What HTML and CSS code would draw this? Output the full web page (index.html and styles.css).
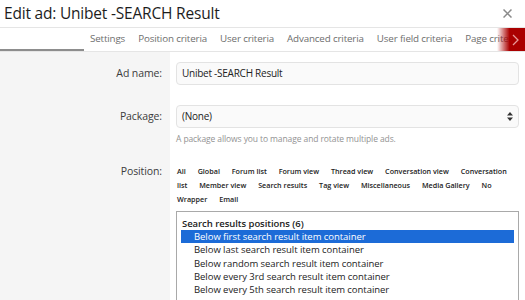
FILE: index.html
```html
<!DOCTYPE html>
<html lang="en">
<head>
    <meta charset="UTF-8">
    <meta name="viewport" content="width=device-width, initial-scale=1.0">
    <title>Edit ad</title>
    <link rel="stylesheet" href="styles.css">
</head>
<body>
    <div class="overlay">
        <div class="overlay-title">
            <span class="title-text">Edit ad: Unibet -SEARCH Result</span>
            <svg class="close" width="9" height="9" viewBox="0 0 9 9"><path d="M0.5 0.5 L8.5 8.5 M8.5 0.5 L0.5 8.5" stroke="#8a8a8a" stroke-width="1.5"/></svg>
        </div>

        <div class="tabs">
            <div class="tabs-line"></div>
            <span class="tab">Settings</span>
            <span class="tab">Position criteria</span>
            <span class="tab">User criteria</span>
            <span class="tab">Advanced criteria</span>
            <span class="tab">User field criteria</span>
            <span class="tab">Page criteria</span>
            <span class="tabs-next">
                <svg width="8" height="12" viewBox="0 0 8 12"><path d="M2 1 L7 6 L2 11" fill="none" stroke="#e89a9a" stroke-width="1.3"/></svg>
            </span>
        </div>

        <div class="form">
            <div class="form-label row-name">Ad name:</div>
            <div class="form-field row-name">
                <div class="input">Unibet -SEARCH Result</div>
            </div>

            <div class="form-label row-pkg">Package:</div>
            <div class="form-field row-pkg">
                <div class="input select">
                    <span>(None)</span>
                    <svg width="6" height="9" viewBox="0 0 6 9"><path d="M3 0 L6 3.5 L0 3.5 Z M3 9 L6 5.5 L0 5.5 Z" fill="#333"/></svg>
                </div>
                <div class="hint">A package allows you to manage and rotate multiple ads.</div>
            </div>

            <div class="form-label row-pos">Position:</div>
            <div class="form-field row-pos">
                <div class="pos-links">
                    <span>All</span>
                    <span>Global</span>
                    <span>Forum list</span>
                    <span>Forum view</span>
                    <span>Thread view</span>
                    <span>Conversation view</span>
                    <span>Conversation list</span>
                    <span>Member view</span>
                    <span>Search results</span>
                    <span>Tag view</span>
                    <span>Miscellaneous</span>
                    <span>Media Gallery</span>
                    <span>No Wrapper</span>
                    <span>Email</span>
                </div>
                <div class="listbox">
                    <div class="group-label">Search results positions (6)</div>
                    <div class="option selected">Below first search result item container</div>
                    <div class="option">Below last search result item container</div>
                    <div class="option">Below random search result item container</div>
                    <div class="option">Below every 3rd search result item container</div>
                    <div class="option">Below every 5th search result item container</div>
                </div>
            </div>
        </div>
    </div>
</body>
</html>
```

FILE: styles.css
```css
body {
    margin: 0;
    font-family: "Open Sans", "Noto Sans", sans-serif;
    color: #141414;
    background: #fff;
    overflow: hidden;
}
.overlay {
    width: 525px;
    height: 300px;
    overflow: hidden;
}
.overlay-title {
    height: 27px;
    border-bottom: 1px solid #e5e5e5;
    display: flex;
    align-items: center;
    justify-content: space-between;
    padding: 0 13px 0 4px;
}
.title-text {
    font-size: 15.5px;
    letter-spacing: -0.2px;
    color: #1d1d1d;
    margin-top: -2px;
}
.close {
    margin-top: -1px;
}
.tabs {
    height: 23px;
    border-bottom: 1px solid #e5e5e5;
    display: flex;
    align-items: center;
    position: relative;
    white-space: nowrap;
    overflow: hidden;
}
.tabs-line {
    position: absolute;
    left: 0;
    bottom: 0;
    width: 84px;
    height: 2px;
    background: #8d8d8d;
}
.tab {
    font-size: 9.8px;
    letter-spacing: -0.15px;
    color: #6e6e6e;
    margin-left: 13px;
    margin-top: -2px;
}
.tab:first-of-type {
    margin-left: 90px;
}
.tabs-next {
    position: absolute;
    right: 0;
    top: 0;
    bottom: 0;
    width: 28px;
    display: flex;
    align-items: center;
    justify-content: flex-end;
    padding-right: 6px;
    box-sizing: border-box;
    background: linear-gradient(to right, rgba(160, 0, 0, 0) 0%, #a00 45%, #a00 100%);
}
.form {
    display: grid;
    grid-template-columns: 170px 1fr;
}
.form-label {
    background: #f5f5f5;
    text-align: right;
    padding-right: 8px;
    font-size: 10.5px;
    letter-spacing: -0.1px;
    color: #3c3c3c;
}
.form-field {
    padding: 0 6px 0 6px;
}
.row-name {
    padding-top: 10px;
}
.form-label.row-name {
    line-height: 23px;
}
.row-pkg {
    padding-top: 20px;
}
.form-label.row-pkg {
    line-height: 23px;
}
.row-pos {
    padding-top: 20px;
}
.form-label.row-pos {
    line-height: 14px;
}
.input {
    height: 23px;
    box-sizing: border-box;
    border: 1px solid #e3e3e3;
    border-radius: 4px;
    background: #fafafa;
    font-size: 10px;
    letter-spacing: -0.25px;
    line-height: 21px;
    padding: 0 5px;
    color: #222;
}
.select {
    display: flex;
    align-items: center;
    justify-content: space-between;
}
.hint {
    font-size: 8.5px;
    letter-spacing: -0.1px;
    color: #939393;
    margin-top: 5px;
}
.pos-links {
    font-size: 7.2px;
    font-weight: 600;
    line-height: 14px;
    color: #222;
    padding-left: 1px;
}
.pos-links span {
    margin-right: 10px;
}
.listbox {
    margin-top: 5px;
    border: 1px solid #a9a9a9;
    padding: 5px 4px 0 5px;
    height: 100px;
    font-size: 9.5px;
    letter-spacing: -0.05px;
    color: #222;
}
.group-label {
    font-weight: 600;
    line-height: 13px;
}
.option {
    line-height: 13.3px;
    padding-left: 12px;
}
.option.selected {
    background: #1c6bd7;
    color: #fff;
    margin-left: -1px;
    padding-left: 13px;
}
```
